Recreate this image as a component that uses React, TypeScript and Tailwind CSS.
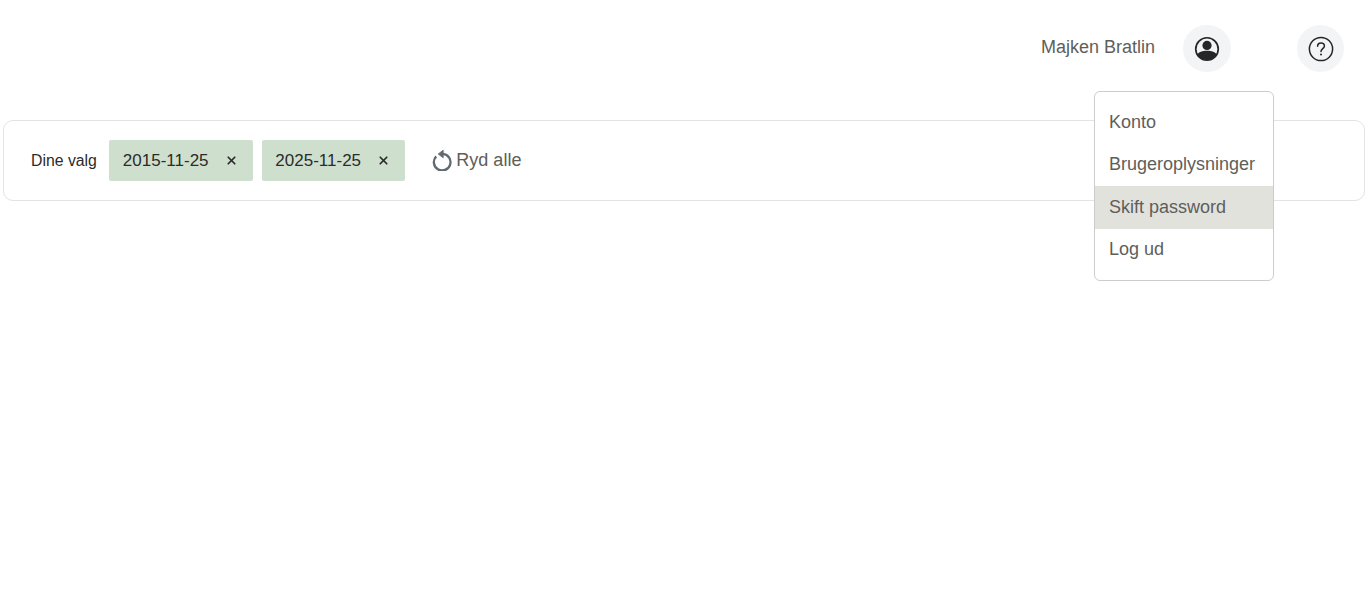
import { X } from 'lucide-react';

const font = { fontFamily: '"Liberation Sans", Arial, sans-serif' };

function UserIcon() {
  return (
    <svg width="26" height="26" viewBox="0 0 26 26" fill="none">
      <circle cx="13" cy="13" r="11.25" stroke="#262626" strokeWidth="1.7" />
      <circle cx="13" cy="9.4" r="4.6" fill="#262626" />
      <path d="M3 19C4.6 16 8.4 14.8 13 14.8s8.4 1.2 10 4.2C20.8 22.4 17 24 13 24S5.2 22.4 3 19Z" fill="#262626" />
    </svg>
  );
}

function HelpIcon() {
  return (
    <svg width="26" height="26" viewBox="0 0 26 26" fill="none">
      <circle cx="13" cy="13" r="11.6" stroke="#262626" strokeWidth="1.5" />
      <path d="M9.6 10.2c0-2 1.5-3.3 3.4-3.3s3.4 1.2 3.4 3c0 2.7-3.4 2.8-3.4 5.6" stroke="#262626" strokeWidth="1.5" strokeLinecap="round" />
      <circle cx="13" cy="18.6" r="1" fill="#262626" />
    </svg>
  );
}

function ResetIcon() {
  return (
    <svg width="20" height="22" viewBox="0 0 20 22" fill="none" className="-translate-y-[1px]">
      <path d="M4.2 7.4A8.3 8.3 0 1 0 11 4.9" stroke="#5f6b70" strokeWidth="2.3" />
      <path d="M11.2 1.2v7.6L6.2 5Z" fill="#5f6b70" stroke="#5f6b70" strokeWidth="0.8" strokeLinejoin="round" />
    </svg>
  );
}

function Chip({ label }: { label: string }) {
  return (
    <div className="flex h-[41px] w-[143.5px] items-center rounded-[2px] bg-[#cfdfce] pl-[13.5px] text-[17px] text-[#2b2b2b]">
      <span>{label}</span>
      <X size={13} strokeWidth={3.2} className="ml-[16px] text-[#2b2b2b]" />
    </div>
  );
}

const menuItems = ['Konto', 'Brugeroplysninger', 'Skift password', 'Log ud'];

export default function App() {
  return (
    <div className="relative min-h-[606px] bg-white" style={font}>
      <header className="flex h-[120px] items-start justify-end pr-[22px] pt-[25px]">
        <span className="mr-[28px] mt-[10px] text-[18px] leading-[24px] text-[#5e5e5a]">Majken Bratlin</span>
        <button className="flex h-[47px] w-[48px] items-center justify-center rounded-full bg-[#f3f4f6]">
          <UserIcon />
        </button>
        <button className="ml-[66px] flex h-[47px] w-[47px] items-center justify-center rounded-full bg-[#f3f4f6]">
          <HelpIcon />
        </button>
      </header>

      <div className="ml-[3px] mr-[1px] flex h-[81px] items-center rounded-[10px] border border-[#e3e3e3] pl-[27px]">
        <span className="mr-[12.5px] text-[15.8px] text-[#2b2b2b]">Dine valg</span>
        <div className="flex gap-[9px]">
          <Chip label="2015-11-25" />
          <Chip label="2025-11-25" />
        </div>
        <button className="ml-[27px] flex items-center text-[18px] text-[#5e5e5a]">
          <ResetIcon />
          <span className="ml-[4px]">Ryd alle</span>
        </button>
      </div>

      <div className="absolute left-[1094px] top-[91px] h-[190px] w-[180px] rounded-[6px] border border-[#cccccc] bg-white pt-[9px]">
        {menuItems.map((item) => (
          <div
            key={item}
            className={`flex h-[42.5px] items-center pl-[14px] text-[18px] text-[#5e5e5a] ${item === 'Skift password' ? 'bg-[#e2e2dd]' : ''}`}
          >
            {item}
          </div>
        ))}
      </div>
    </div>
  );
}
